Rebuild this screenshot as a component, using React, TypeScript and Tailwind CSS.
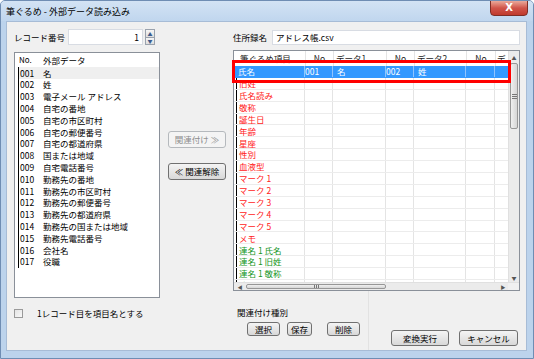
import React from 'react';

const leftItems = [
  ['001', '名'],
  ['002', '姓'],
  ['003', '電子メール アドレス'],
  ['004', '自宅の番地'],
  ['005', '自宅の市区町村'],
  ['006', '自宅の郵便番号'],
  ['007', '自宅の都道府県'],
  ['008', '国または地域'],
  ['009', '自宅電話番号'],
  ['010', '勤務先の番地'],
  ['011', '勤務先の市区町村'],
  ['012', '勤務先の郵便番号'],
  ['013', '勤務先の都道府県'],
  ['014', '勤務先の国または地域'],
  ['015', '勤務先電話番号'],
  ['016', '会社名'],
  ['017', '役職'],
];

const red = ['旧姓', '氏名読み', '敬称', '誕生日', '年齢', '星座', '性別', '血液型', 'マーク 1', 'マーク 2', 'マーク 3', 'マーク 4', 'マーク 5', 'メモ'];
const green = ['連名 1 氏名', '連名 1 旧姓', '連名 1 敬称', '連名 2 氏名'];

function Btn({ children, className = '' }: { children: React.ReactNode; className?: string }) {
  return (
    <div
      className={`flex items-center justify-center rounded-[3px] border border-[#707070] bg-linear-to-b from-[#f4f4f4] to-[#d8d8d8] text-black ${className}`}
    >
      {children}
    </div>
  );
}

function Cells({ first, c1 = '', c2 = '', c3 = '', c4 = '', sel = false, color = '' }: any) {
  const line = sel ? 'border-[#8fc4ff]' : 'border-[#e4e4e4]';
  return (
    <>
      <div className={`w-[69px] pl-[2px] border-r ${line} ${sel ? '' : 'border-l border-l-black'} ${color} truncate`}>{first}</div>
      <div className={`w-[28px] text-center border-r ${line}`}>{c1}</div>
      <div className={`w-[53px] pl-[4px] border-r ${line}`}>{c2}</div>
      <div className={`w-[28px] text-center border-r ${line}`}>{c3}</div>
      <div className={`w-[52px] pl-[4px] border-r ${line}`}>{c4}</div>
      <div className={`w-[29px] border-r ${line}`}></div>
      <div className="flex-1"></div>
    </>
  );
}

export default function App() {
  return (
    <div className="w-[534px] h-[359px] flex flex-col bg-[#bcd3ec] border border-[#6f8db3] rounded-t-[5px] overflow-hidden font-['Noto_Sans_CJK_JP','Noto_Sans',sans-serif] text-[8.5px] leading-none text-black">
      {/* title bar */}
      <div className="h-[20px] flex items-center pl-[5px] bg-linear-to-b from-[#d3e3f4] to-[#c0d6ee] relative">
        <span className="text-[9px] text-black">筆ぐるめ - 外部データ読み込み</span>
        <div className="absolute right-[5px] top-[-1px] w-[38px] h-[16px] rounded-b-[4px] border border-[#7e2e26] bg-linear-to-b from-[#e9a99b] via-[#d0544a] to-[#c03a2c] flex items-center justify-center text-white text-[10px] font-bold font-['DejaVu_Sans',sans-serif]">
          X
        </div>
      </div>

      {/* client area */}
      <div className="flex-1 ml-[5px] mr-[6px] bg-[#f0f0f0] border border-[#a7bcd6] flex pt-[7px] pl-[7px]">
        {/* left column */}
        <div className="w-[146px] flex flex-col">
          <div className="h-[16px] flex items-center">
            <span className="w-[54px]">レコード番号</span>
            <div className="w-[75px] h-[16px] bg-white border border-[#d8dce3] flex items-center justify-end pr-[3px]">1</div>
            <div className="ml-[2px] w-[10px] h-[16px] flex flex-col">
              <div className="flex-1 border border-[#9aa2ad] bg-linear-to-b from-[#f6f6f6] to-[#dedede] flex items-center justify-center text-[5px] text-[#3b5c8c]">▲</div>
              <div className="flex-1 border border-t-0 border-[#9aa2ad] bg-linear-to-b from-[#f6f6f6] to-[#dedede] flex items-center justify-center text-[5px] text-[#3b5c8c]">▼</div>
            </div>
          </div>

          <div className="mt-[7px] h-[246px] bg-white border border-[#8a9099] flex flex-col">
            <div className="h-[14px] flex items-center pl-[4px]">
              <span className="w-[24px] text-[8px]">No.</span>
              <span>外部データ</span>
            </div>
            <div className="ml-[3px] border-l border-black">
              {leftItems.map(([no, name], i) => (
                <div key={no} className={`h-[11.8px] flex items-center ${i === 0 ? 'bg-[#efefef]' : ''}`}>
                  <span className="w-[24px] pl-[1px]">{no}</span>
                  <span>{name}</span>
                </div>
              ))}
            </div>
          </div>

          <div className="mt-[11px] flex items-center">
            <div className="w-[9px] h-[9px] border border-[#9a9a9a] bg-linear-to-br from-[#e4e4e4] to-[#f8f8f8]"></div>
            <span className="ml-[14px]">1レコード目を項目名とする</span>
          </div>
        </div>

        {/* middle buttons */}
        <div className="w-[73px] flex flex-col pl-[8px] pt-[102px]">
          <div className="w-[58px] h-[17px] rounded-[3px] border border-[#b5b9bd] bg-[#f4f4f4] text-[#8d8d8d] flex items-center justify-center">
            関連付け ≫
          </div>
          <Btn className="mt-[15px] w-[58px] h-[17px]">≪ 関連解除</Btn>
        </div>

        {/* right column */}
        <div className="w-[287px] flex flex-col">
          <div className="h-[16px] flex items-center">
            <span className="w-[39px]">住所録名</span>
            <div className="flex-1 h-[15px] bg-white border border-[#d8dce3] flex items-center pl-[3px]">アドレス帳.csv</div>
          </div>

          <div className="mt-[5px] h-[241px] relative bg-white border border-[#8a9099] flex flex-col">
            <div className="flex-1 flex min-h-0">
              <div className="flex-1 flex flex-col min-h-0 overflow-hidden">
                {/* header */}
                <div className="h-[15px] shrink-0 flex items-center text-[#222]">
                  <div className="w-[3px]"></div>
                  <div className="w-[69px] pl-[3px] border-r border-[#e4e4e4] h-full flex items-center">筆ぐるめ項目</div>
                  <div className="w-[28px] text-center border-r border-[#e4e4e4] h-full flex items-center justify-center">No</div>
                  <div className="w-[53px] pl-[2px] border-r border-[#e4e4e4] h-full flex items-center">データ1</div>
                  <div className="w-[28px] border-r border-[#e4e4e4] h-full flex items-center justify-center">No</div>
                  <div className="w-[52px] pl-[2px] border-r border-[#e4e4e4] h-full flex items-center">データ2</div>
                  <div className="w-[29px] border-r border-[#e4e4e4] h-full flex items-center justify-center">No</div>
                  <div className="flex-1 pl-[1px] overflow-hidden whitespace-nowrap h-full flex items-center">デ</div>
                </div>
                {/* rows */}
                <div className="flex-1 min-h-0 overflow-hidden">
                  <div className="h-[11.9px] flex items-stretch bg-[#3399ff] text-white border-b border-[#3399ff] [&>div]:flex [&>div]:items-center">
                    <div className="w-[2px]"></div>
                    <Cells first="氏名" c1="001" c2="名" c3="002" c4="姓" sel />
                  </div>
                  {red.map((t) => (
                    <div key={t} className="h-[11.9px] flex items-stretch border-b border-[#ececec] [&>div]:flex [&>div]:items-center">
                      <div className="w-[2px]"></div>
                      <Cells first={t} color="text-[#ff1a1a]" />
                    </div>
                  ))}
                  {green.map((t) => (
                    <div key={t} className="h-[11.9px] flex items-stretch border-b border-[#ececec] [&>div]:flex [&>div]:items-center">
                      <div className="w-[2px]"></div>
                      <Cells first={t} color="text-[#14961e]" />
                    </div>
                  ))}
                </div>
              </div>
              {/* vertical scrollbar */}
              <div className="w-[11px] bg-[#ebebeb] border-l border-[#e0e0e0] flex flex-col">
                <div className="h-[12px] flex items-center justify-center text-[5px] text-[#555]">▲</div>
                <div className="h-[66px] mx-[1px] rounded-[2px] border border-[#979797] bg-linear-to-r from-[#f0f0f0] to-[#d6d6d6] flex items-center justify-center">
                  <div className="w-[5px] flex flex-col gap-[1px]">
                    <div className="h-px bg-[#777]"></div>
                    <div className="h-px bg-[#777]"></div>
                    <div className="h-px bg-[#777]"></div>
                  </div>
                </div>
                <div className="flex-1"></div>
                <div className="h-[10px] flex items-center justify-center text-[5px] text-[#555]">▼</div>
              </div>
            </div>
            {/* horizontal scrollbar */}
            <div className="h-[8px] flex bg-[#ebebeb] border-t border-[#e0e0e0]">
              <div className="w-[12px] flex items-center justify-center text-[5px] text-[#555]">◀</div>
              <div className="w-[140px] my-[1px] rounded-[2px] border border-[#979797] bg-linear-to-b from-[#f0f0f0] to-[#d6d6d6] flex items-center justify-center gap-[1px]">
                <div className="w-px h-[3px] bg-[#777]"></div>
                <div className="w-px h-[3px] bg-[#777]"></div>
                <div className="w-px h-[3px] bg-[#777]"></div>
              </div>
              <div className="flex-1"></div>
              <div className="w-[10px] flex items-center justify-center text-[5px] text-[#555]">▶</div>
              <div className="w-[11px] bg-[#f0f0f0]"></div>
            </div>

            {/* red highlight */}
            <div className="absolute left-[-2px] top-[9px] w-[279px] h-[23px] border-[3px] border-[#ff0000]"></div>
          </div>

          {/* bottom controls */}
          <div className="flex">
            <div className="w-[136px] h-[59px] border-r border-[#e2e2e2] flex flex-col">
              <span className="mt-[16px] pl-[4px] h-[10px] flex items-center">関連付け種別</span>
              <div className="mt-[5px] pl-[14px] flex">
                <Btn className="w-[33px] h-[14px]">選択</Btn>
                <Btn className="ml-[7px] w-[25px] h-[14px]">保存</Btn>
                <Btn className="ml-[15px] w-[33px] h-[14px]">削除</Btn>
              </div>
            </div>
            <div className="flex pt-[39px] pl-[22px]">
              <Btn className="w-[58px] h-[16px] border-[#3c7fb1] from-[#eef6fc] to-[#d2e5f4]">変換実行</Btn>
              <Btn className="ml-[10px] w-[59px] h-[16px]">キャンセル</Btn>
            </div>
          </div>
        </div>
      </div>
      <div className="h-[7px]"></div>
    </div>
  );
}
